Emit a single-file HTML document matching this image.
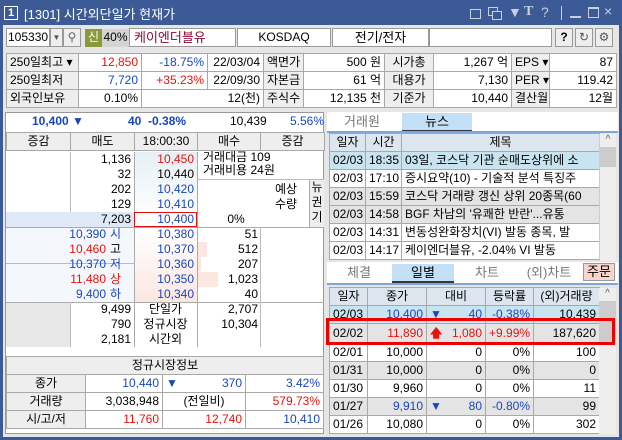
<!DOCTYPE html>
<html><head><meta charset="utf-8"><style>
*{box-sizing:border-box;margin:0;padding:0}
body{width:622px;height:440px;overflow:hidden;background:#3c5a96;font-family:"Liberation Sans","Noto Sans CJK KR","NanumGothic",sans-serif;font-size:12px;color:#000;position:relative}
.a{position:absolute}
#win{position:absolute;left:3px;top:25px;width:616px;height:412px;background:#e6e6e6}
table{border-collapse:collapse;table-layout:fixed;position:absolute}
td{border:1px solid #a8a8a8;height:18px;padding:0 3px;white-space:nowrap;overflow:hidden;line-height:15px}
.r{text-align:right}.c{text-align:center}
.red{color:#e8120c}.blu{color:#1846c0}
.lb{background:#eeeeee}
.w{background:#fff}
.tab{position:absolute;top:0;height:17px;text-align:center;color:#777;font-size:13px;line-height:17px}
.ti{position:absolute;top:4px;color:#c8d0e0;font-size:14px;white-space:nowrap}
</style></head><body>
<!-- title -->
<div class="a" style="left:4px;top:6px;width:14px;height:14px;border:1px solid #fff;color:#fff;font-size:11px;line-height:12px;text-align:center;font-weight:bold">1</div>
<div class="a" style="left:24px;top:4px;color:#fff;font-size:13px">[1301] 시간외단일가 현재가</div>
<div class="a" style="left:470px;top:9px;width:11px;height:10px;border:1px solid #c8d0e0"></div>
<div class="a" style="left:488px;top:7px;width:10px;height:9px;border:1px solid #c8d0e0"></div>
<div class="a" style="left:492px;top:11px;width:10px;height:9px;border:1px solid #c8d0e0;background:#3c5a96"></div>
<div class="ti" style="left:508px">▼</div>
<div class="ti" style="left:524px;font-family:'Liberation Serif',serif;font-weight:bold">T</div>
<div class="ti" style="left:541px">?</div>
<div class="a" style="left:561px;top:6px;width:1px;height:14px;background:#c8d0e0"></div>
<div class="a" style="left:570px;top:16px;width:11px;height:2px;background:#c8d0e0"></div>
<div class="a" style="left:588px;top:7px;width:11px;height:11px;border:1px solid #c8d0e0;border-top-width:2px"></div>
<div class="ti" style="left:604px;top:3px">×</div>
<div id="win"></div>
<!-- toolbar -->
<div class="a w" style="left:6px;top:28px;width:44px;height:19px;border:1px solid #999;padding-left:1px;line-height:17px;overflow:hidden">105330</div>
<div class="a" style="left:50px;top:28px;width:13px;height:19px;border:1px solid #999;background:#eee;font-size:8px;line-height:17px;text-align:center;color:#555">▼</div>
<div class="a" style="left:63px;top:28px;width:18px;height:19px;border:1px solid #999;background:#eee;text-align:center;line-height:17px;color:#666">⚲</div>
<div class="a" style="left:85px;top:29px;width:17px;height:18px;background:#8a9a3a;color:#fff;text-align:center;line-height:17px">신</div>
<div class="a" style="left:102px;top:29px;width:27px;height:18px;background:#d4d4d4;text-align:center;line-height:17px">40%</div>
<div class="a w" style="left:129px;top:28px;width:107px;height:19px;border:1px solid #999;color:#8a0a3a;font-size:13px;padding-left:4px;line-height:17px">케이엔더블유</div>
<div class="a w" style="left:237px;top:28px;width:94px;height:19px;border:1px solid #999;text-align:center;line-height:17px">KOSDAQ</div>
<div class="a w" style="left:332px;top:28px;width:97px;height:19px;border:1px solid #999;text-align:center;line-height:17px;font-size:13px">전기/전자</div>
<div class="a w" style="left:429px;top:28px;width:123px;height:19px;border:1px solid #999"></div>
<div class="a" style="left:555px;top:28px;width:18px;height:19px;border:1px solid #999;background:#eee;text-align:center;font-weight:bold;line-height:17px">?</div>
<div class="a" style="left:575px;top:28px;width:18px;height:19px;border:1px solid #999;background:#eee;text-align:center;line-height:17px;color:#555">↻</div>
<div class="a" style="left:595px;top:28px;width:18px;height:19px;border:1px solid #999;background:#eee;text-align:center;line-height:17px;color:#555">⚙</div>
<!-- info -->
<table style="left:6px;top:53px;width:610px">
<colgroup><col style="width:72px"><col style="width:63px"><col style="width:66px"><col style="width:56px"><col style="width:40px"><col style="width:81px"><col style="width:49px"><col style="width:78px"><col style="width:38px"><col style="width:67px"></colgroup>
<tr><td class="lb">250일최고 ▾</td><td class="r red w">12,850</td><td class="r blu w">-18.75%</td><td class="r w">22/03/04</td><td class="lb c">액면가</td><td class="r w">500 원</td><td class="lb c">시가총</td><td class="r w">1,267 억</td><td class="lb">EPS ▾</td><td class="r w">87</td></tr>
<tr><td class="lb">250일최저</td><td class="r blu w">7,720</td><td class="r red w">+35.23%</td><td class="r w">22/09/30</td><td class="lb c">자본금</td><td class="r w">61 억</td><td class="lb c">대용가</td><td class="r w">7,130</td><td class="lb">PER ▾</td><td class="r w">119.42</td></tr>
<tr><td class="lb">외국인보유</td><td class="r w">0.10%</td><td class="r w" colspan="2">12(천)</td><td class="lb c">주식수</td><td class="r w">12,135 천</td><td class="lb c">기준가</td><td class="r w">10,440</td><td class="lb c">결산월</td><td class="r w">12월</td></tr>
</table>
<!-- left main -->
<div class="a w" style="left:5px;top:112px;width:319px;height:322px;border:1px solid #999"></div>
<div class="a" style="left:32px;top:114px;color:#1846c0;font-weight:bold">10,400 ▼</div>
<div class="a" style="left:128px;top:114px;color:#1846c0;font-weight:bold">40 &nbsp;-0.38%</div>
<div class="a" style="left:230px;top:114px">10,439</div>
<div class="a" style="left:290px;top:114px;color:#1846c0">5.56%</div>
<table style="left:6px;top:132px;width:318px">
<colgroup><col style="width:64px"><col style="width:64px"><col style="width:63px"><col style="width:63px"><col style="width:64px"></colgroup>
<tr class="lb"><td class="c">증감</td><td class="c">매도</td><td class="c">18:00:30</td><td class="c">매수</td><td class="c">증감</td></tr>
</table>
<div class="a" style="left:6px;top:152px;width:318px;height:195px;font-size:12px;line-height:15px">
 <div class="a" style="left:64px;top:0;width:1px;height:75px;background:#bbb"></div>
 <div class="a" style="left:128px;top:0;width:63px;height:150px;background:linear-gradient(#e6f0f4,#fff 45%,#fff 52%,#fbe6e0)"></div>
 <div class="a" style="left:0;top:60px;width:128px;height:15px;background:#dfe8f6"></div>
 <div class="a" style="left:0;top:75px;width:128px;height:75px;background:#f4f8fc"></div>
 <div class="a" style="left:0;top:150px;width:64px;height:45px;background:#e8e8e8"></div>
 <div class="a" style="left:0;top:75px;width:318px;height:1px;background:#aaa"></div>
 <div class="a" style="left:0;top:150px;width:318px;height:1px;background:#aaa"></div>
 <div class="a" style="left:0;top:111px;width:128px;height:1px;background:#bbb"></div>
 <div class="a" style="left:128px;top:0;width:1px;height:195px;background:#aaa"></div>
 <div class="a" style="left:191px;top:0;width:1px;height:195px;background:#aaa"></div>
 <div class="a" style="left:254px;top:75px;width:1px;height:120px;background:#bbb"></div>
 <div class="a" style="left:64px;top:150px;width:1px;height:45px;background:#bbb"></div>
 <div class="a" style="left:192px;top:27px;width:126px;height:1px;background:#bbb"></div>
 <div class="a" style="left:192px;top:90px;width:9px;height:15px;background:#fbe6e0"></div>
 <div class="a" style="left:192px;top:105px;width:3px;height:14px;background:#fbe6e0"></div>
 <div class="a" style="left:192px;top:120px;width:20px;height:15px;background:#fbe6e0"></div>
 <div class="a r" style="left:64px;top:0;width:61px">1,136<br>32<br>202<br>129<br>7,203</div>
 <div class="a r" style="left:128px;top:0;width:60px"><span class="red">10,450</span><br>10,440<br><span class="blu">10,420<br>10,410<br>10,400</span></div>
 <div class="a" style="left:128px;top:60px;width:63px;height:15px;border:1px solid #e01010"></div>
 <div class="a" style="left:197px;top:-1px;font-size:12px;line-height:13px">거래대금 109<br>거래비용 24원</div>
 <div class="a c" style="left:255px;top:30px;width:50px;line-height:15px">예상<br>수량</div>
 <div class="a c" style="left:210px;top:60px;width:40px">0%</div>
 <div class="a" style="left:303px;top:28px;width:15px;height:47px;background:#eee;border-left:1px solid #aaa;line-height:15px;text-align:center">뉴<br>권<br>기</div>
 <div class="a r" style="left:0;top:75px;width:100px"><span class="blu">10,390</span><br><span class="red">10,460</span><br><span class="blu">10,370</span><br><span class="red">11,480</span><br><span class="blu">9,400</span></div>
 <div class="a" style="left:104px;top:75px"><span class="blu">시</span><br>고<br><span class="blu">저</span><br><span class="red">상</span><br><span class="blu">하</span></div>
 <div class="a r blu" style="left:128px;top:75px;width:60px">10,380<br>10,370<br>10,360<br>10,350<br>10,340</div>
 <div class="a r" style="left:191px;top:75px;width:61px">51<br>512<br>207<br>1,023<br>40</div>
 <div class="a r" style="left:64px;top:150px;width:61px">9,499<br>790<br>2,181</div>
 <div class="a c" style="left:128px;top:150px;width:63px">단일가<br>정규시장<br>시간외</div>
 <div class="a r" style="left:191px;top:150px;width:61px">2,707<br>10,304</div>
</div>
<table style="left:6px;top:356px;width:317px">
<colgroup><col style="width:79px"><col style="width:77px"><col style="width:83px"><col style="width:78px"></colgroup>
<tr class="lb"><td class="c" colspan="4">정규시장정보</td></tr>
<tr><td class="c lb">종가</td><td class="r blu w">10,440</td><td class="w blu">▼<span style="float:right">370</span></td><td class="r blu w">3.42%</td></tr>
<tr><td class="c lb">거래량</td><td class="r w">3,038,948</td><td class="c w">(전일비)</td><td class="r red w">579.73%</td></tr>
<tr><td class="c lb">시/고/저</td><td class="r red w">11,760</td><td class="r red w">12,740</td><td class="r blu w">10,410</td></tr>
</table>
<!-- right news -->
<div class="a w" style="left:327px;top:112px;width:291px;height:19px"></div>
<div class="a" style="left:327px;top:112px;width:291px;height:19px">
 <div class="tab" style="left:0;width:70px;top:1px">거래원</div>
 <div class="tab" style="left:75px;width:70px;top:1px;background:#c4e0f6;color:#000">뉴스</div>
 <div class="a" style="left:75px;top:18px;width:70px;height:2px;background:#334"></div>
</div>
<div class="a" style="left:327px;top:131px;width:291px;height:2px;background:#7aa8dc"></div>
<table style="left:329px;top:133px;width:270px;font-size:12px">
<colgroup><col style="width:36px"><col style="width:36px"><col style="width:198px"></colgroup>
<tr style="background:#dde6ee"><td class="c">일자</td><td class="c">시간</td><td class="c">제목</td></tr>
<tr style="background:#c8e4f0"><td>02/03</td><td>18:35</td><td>03일, 코스닥 기관 순매도상위에 소</td></tr>
<tr class="w"><td>02/03</td><td>17:10</td><td>증시요약(10) - 기술적 분석 특징주</td></tr>
<tr style="background:#e4e4e4"><td>02/03</td><td>15:59</td><td>코스닥 거래량 갱신 상위 20종목(60</td></tr>
<tr style="background:#e4e4e4"><td>02/03</td><td>14:58</td><td>BGF 차남의 '유쾌한 반란'...유통 </td></tr>
<tr class="w"><td>02/03</td><td>14:31</td><td>변동성완화장치(VI) 발동 종목, 발</td></tr>
<tr class="w"><td>02/03</td><td>14:17</td><td>케이엔더블유, -2.04% VI 발동</td></tr>
</table>
<div class="a" style="left:599px;top:134px;width:17px;height:127px;background:#eee;border-left:1px solid #ccc;color:#555;text-align:center;font-size:10px">^<div style="height:20px;background:#ccc;margin-top:2px"></div></div>
<div class="a" style="left:327px;top:262px;width:291px;height:21px;background:#fff">
 <div class="tab" style="left:2px;width:60px;top:2px">체결</div>
 <div class="tab" style="left:65px;width:62px;top:2px;background:#c4e0f6;color:#000">일별</div>
 <div class="a" style="left:65px;top:19px;width:62px;height:2px;background:#334"></div>
 <div class="tab" style="left:130px;width:60px;top:2px">차트</div>
 <div class="tab" style="left:192px;width:60px;top:2px">(외)차트</div>
 <div class="a" style="left:256px;top:1px;width:32px;height:18px;background:#f8d4cc;border:1px solid #999;text-align:center;line-height:16px;font-size:13px">주문</div>
</div>
<div class="a" style="left:327px;top:283px;width:291px;height:2px;background:#7aa8dc"></div>
<table style="left:329px;top:287px;width:270px;font-size:12px">
<colgroup><col style="width:38px"><col style="width:59px"><col style="width:59px"><col style="width:48px"><col style="width:66px"></colgroup>
<tr style="background:#dde6ee"><td class="c">일자</td><td class="c">종가</td><td class="c">대비</td><td class="c">등락률</td><td class="c">(외)거래량</td></tr>
<tr style="background:#c8e4f0"><td>02/03</td><td class="r blu">10,400</td><td class="blu">▼<span style="float:right">40</span></td><td class="r blu">-0.38%</td><td class="r">10,439</td></tr>
<tr style="background:#e4e4e4;height:20px"><td>02/02</td><td class="r red">11,890</td><td class="red"><b>🡅</b><span style="float:right">1,080</span></td><td class="r red">+9.99%</td><td class="r">187,620</td></tr>
<tr class="w"><td>02/01</td><td class="r">10,000</td><td class="r">0</td><td class="r">0%</td><td class="r">100</td></tr>
<tr style="background:#e4e4e4"><td>01/31</td><td class="r">10,000</td><td class="r">0</td><td class="r">0%</td><td class="r">0</td></tr>
<tr class="w"><td>01/30</td><td class="r">9,960</td><td class="r">0</td><td class="r">0%</td><td class="r">11</td></tr>
<tr style="background:#e4e4e4"><td>01/27</td><td class="r blu">9,910</td><td class="blu">▼<span style="float:right">80</span></td><td class="r blu">-0.80%</td><td class="r">99</td></tr>
<tr class="w"><td>01/26</td><td class="r">10,080</td><td class="r">0</td><td class="r">0%</td><td class="r">302</td></tr>
</table>
<div class="a" style="left:599px;top:288px;width:17px;height:146px;background:#eee;color:#555;text-align:center;font-size:10px">^<div style="height:42px;background:#ccc;margin-top:2px"></div></div>
<div class="a" style="left:326px;top:318px;width:289px;height:27px;border:3px solid #ee0000"></div>
</body></html>
